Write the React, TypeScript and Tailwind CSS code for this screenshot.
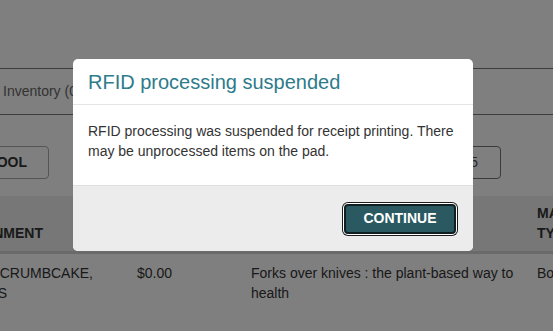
import { useState } from 'react'

const font = { fontFamily: '"Liberation Sans", Arial, sans-serif' }

export default function App() {
  const [open, setOpen] = useState(true)

  return (
    <div className="relative h-[331px] w-[553px] overflow-hidden bg-white text-[#333]" style={font}>
      {/* page behind the dialog */}
      <div className="pt-[68px]">
        <div className="flex h-[47px] items-center border-y-[1.5px] border-[#7a7a7a] pl-[3px] text-[14px] text-[#666]">
          Inventory (0)
        </div>

        <div className="mt-[31px] flex h-[33px] items-stretch justify-between pr-[52px]">
          <button className="-ml-[20px] flex w-[69px] items-center justify-end rounded-[4px] border border-[#aaa] pr-[21px] text-[14px] font-bold text-[#333]">
            OOL
          </button>
          <div className="flex w-[90px] items-center justify-end rounded-[4px] border border-[#777] pr-[22px] text-[14px] text-[#555]">
            1 - 25
          </div>
        </div>

        <div className="mt-[17px] grid h-[58px] grid-cols-[137px_114px_286px_60px] border-b-[3px] border-[#d4d4d4] bg-[#eee] text-[14px] font-bold leading-[20px] text-[#333]">
          <div className="-ml-[62px] self-end whitespace-nowrap pb-[8px]">CONSIGNMENT</div>
          <div />
          <div />
          <div className="self-end pb-[8px]">
            MATERIAL
            <br />
            TYPE
          </div>
        </div>

        <div className="grid grid-cols-[137px_114px_286px_60px] pt-[9px] text-[14px] leading-[20px] text-[#333]">
          <div className="-ml-[61px]">COFFEE CRUMBCAKE, PASTRIES</div>
          <div>$0.00</div>
          <div className="pr-[10px]">Forks over knives : the plant-based way to health</div>
          <div>Book</div>
        </div>
      </div>

      {open && (
        <div className="absolute inset-0 bg-black/50">
          <div className="absolute left-[73px] top-[59px] w-[400px] overflow-hidden rounded-[5px] bg-white">
            <div className="flex h-[46px] items-center border-b border-[#e5e5e5] px-[15px] text-[20px] leading-[22px] text-[#2d7b8b]">
              RFID processing suspended
            </div>
            <div className="h-[81px] border-b border-[#e0e0e0] px-[15px] pt-[16px] text-[14px] leading-[20px] text-[#333]">
              RFID processing was suspended for receipt printing. There may be unprocessed items on the pad.
            </div>
            <div className="flex h-[65px] items-center justify-end bg-[#ececec] px-[17px]">
              <button
                onClick={() => setOpen(false)}
                className="h-[30px] w-[112px] rounded-[4px] border-2 border-[#0f1e21] bg-[#2a5962] text-[14px] font-bold text-white shadow-[0_0_0_1px_#fff,0_0_0_2px_#1c1c1c]"
              >
                CONTINUE
              </button>
            </div>
          </div>
        </div>
      )}
    </div>
  )
}
